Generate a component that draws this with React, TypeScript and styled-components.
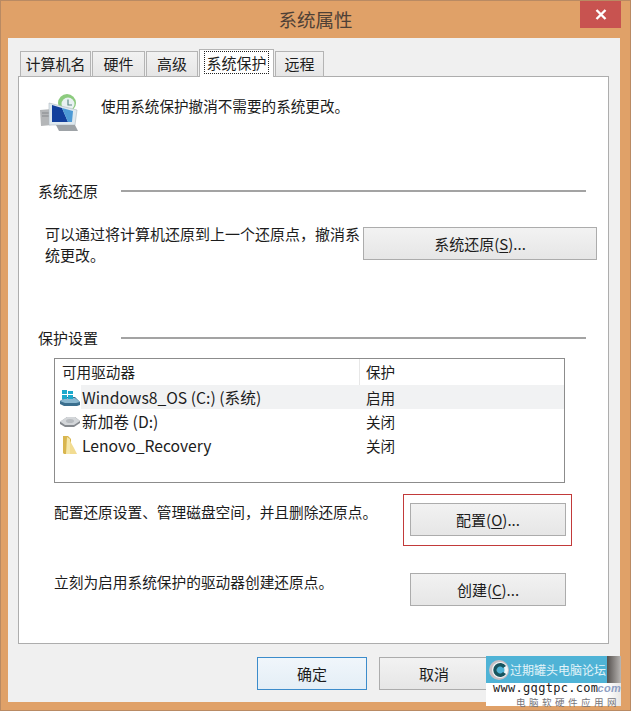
import React from 'react';
import styled, { createGlobalStyle } from 'styled-components';

const GlobalStyle = createGlobalStyle`
	html, body {
		margin: 0;
		padding: 0;
		background: #ffffff;
	}
	body {
		font-family: 'Noto Sans CJK SC', 'Open Sans', sans-serif;
		color: #1c1c1c;
	}
`;

const Window = styled.div`
	position: relative;
	width: 631px;
	height: 711px;
	box-sizing: border-box;
	background: #e0a168;
	border: 1px solid #b98a63;
	display: flex;
	flex-direction: column;
	overflow: hidden;
`;

const TitleBar = styled.div`
	height: 37px;
	box-sizing: border-box;
	padding-bottom: 2px;
	flex: none;
	display: flex;
	justify-content: center;
	align-items: center;
	position: relative;
	font-size: 18.5px;
	color: #4e4036;
`;

const CloseButton = styled.div`
	position: absolute;
	right: 9px;
	top: 0;
	width: 41px;
	height: 27px;
	background: #c85350;
	display: flex;
	align-items: center;
	justify-content: center;
`;

const Client = styled.div`
	flex: 1;
	margin: 0 10px 8px 7px;
	background: #f0f0f0;
	padding: 10px 11px 0 10px;
	display: flex;
	flex-direction: column;
`;

const TabStrip = styled.div`
	display: flex;
	align-items: flex-end;
	gap: 1px;
	height: 29px;
	padding-left: 2px;
	flex: none;
	position: relative;
	z-index: 1;
	margin-bottom: -1px;
`;

const Tab = styled.div<{ $width: number; $active?: boolean }>`
	width: ${p => p.$width}px;
	height: ${p => (p.$active ? 28 : 26)}px;
	box-sizing: border-box;
	display: flex;
	align-items: center;
	justify-content: center;
	font-size: 15px;
	padding-bottom: 2px;
	border: 1px solid #b4b4b4;
	border-bottom: ${p => (p.$active ? 'none' : '1px solid #b4b4b4')};
	background: ${p => (p.$active ? '#ffffff' : 'linear-gradient(#f2f2f2, #e6e6e6)')};
`;

const FocusLabel = styled.span`
	outline: 1px dotted #222222;
	padding: 0 1px;
	line-height: 21px;
`;

const Panel = styled.div`
	width: 591px;
	height: 568px;
	box-sizing: border-box;
	background: #ffffff;
	border: 1px solid #adadad;
	padding: 10px 22px 0 19px;
	display: flex;
	flex-direction: column;
`;

const IntroRow = styled.div`
	display: flex;
	align-items: flex-start;
	gap: 19px;
	height: 94px;
	padding-left: 2px;
	box-sizing: border-box;
	font-size: 14.6px;
	line-height: 20px;
`;

const IntroIcon = styled.div`
	padding-top: 7px;
	height: 40px;
`;

const IntroText = styled.span`
	padding-top: 9px;
`;

const SectionHeading = styled.div`
	display: flex;
	align-items: center;
	gap: 23px;
	font-size: 15px;
	line-height: 20px;
	height: 20px;

	&::after {
		content: '';
		flex: 1;
		height: 2px;
		background: #a3a3a3;
	}
`;

const RestoreRow = styled.div`
	display: flex;
	justify-content: space-between;
	align-items: flex-start;
	margin: 26px -11px 0 7px;
	height: 101px;
`;

const RestoreText = styled.p`
	margin: 0;
	width: 318px;
	font-size: 15px;
	line-height: 21px;
	height: 33px;
	display: flex;
	align-items: center;
`;

const Button = styled.div<{ $width: number; $default?: boolean }>`
	width: ${p => p.$width}px;
	height: 33px;
	box-sizing: border-box;
	padding-bottom: 1px;
	flex: none;
	display: flex;
	align-items: center;
	justify-content: center;
	font-size: 15px;
	color: #1c1c1c;
	border: 1px solid ${p => (p.$default ? '#3c8ccb' : '#acacac')};
	background: ${p => (p.$default ? 'linear-gradient(#f0f6fb, #e4eef6)' : 'linear-gradient(#f2f2f2, #e6e6e6)')};
`;

const Shortcut = styled.span`
	text-decoration: underline;
	text-underline-offset: 2px;
`;

const DriveList = styled.div`
	margin: 10px 21px 0 16px;
	height: 125px;
	box-sizing: border-box;
	border: 1px solid #8c8c8c;
	background: #ffffff;
	font-size: 14.6px;
`;

const DriveHeader = styled.div`
	display: grid;
	grid-template-columns: 305px 1fr;
	height: 26px;
	align-items: center;
	line-height: 26px;
`;

const HeaderCell = styled.div`
	padding-left: 7px;
	border-right: 1px solid #e7e7e7;

	&:last-child {
		border-right: none;
		padding-left: 6px;
	}
`;

const DriveRow = styled.div<{ $selected?: boolean }>`
	display: grid;
	grid-template-columns: 305px 1fr;
	height: 24px;
	align-items: center;
	background: ${p => (p.$selected ? 'linear-gradient(90deg, #ffffff 0, #ffffff 26px, #f1f2f3 26px)' : 'transparent')};
`;

const DriveName = styled.div`
	display: flex;
	align-items: center;
	gap: 1px;
	padding-left: 4px;
	font-size: 15.7px;
	white-space: nowrap;
`;

const DriveState = styled.div`
	padding-left: 6px;
	font-size: 14.6px;
`;

const ActionRow = styled.div<{ $top: number }>`
	display: flex;
	align-items: flex-start;
	justify-content: space-between;
	margin: ${p => p.$top}px 20px 0 16px;
	font-size: 14.7px;
`;

const ActionText = styled.span`
	line-height: 20px;
	margin-top: -1px;
`;

const Highlight = styled.div`
	position: absolute;
	left: 402px;
	top: 493px;
	width: 169px;
	height: 52px;
	box-sizing: border-box;
	border: 1px solid #c23a3a;
`;

const Footer = styled.div`
	display: flex;
	gap: 12px;
	padding: 13px 0 0 239px;
`;

const Watermark = styled.div`
	position: absolute;
	left: 485px;
	top: 655px;
	width: 135px;
	height: 50px;
	background: linear-gradient(90deg, transparent 0, transparent 121px, #55504d 121px, #b9b6b3 135px);
`;

const WatermarkBand = styled.div`
	width: 121px;
	height: 27px;
	background: #4fb3d6;
	color: #e3f4f9;
	font-size: 12px;
	display: flex;
	align-items: center;
	padding-left: 2px;
	box-sizing: border-box;
	white-space: nowrap;

	svg {
		flex: none;
	}
`;

const WatermarkBody = styled.div`
	position: relative;
	height: 23px;
	background: linear-gradient(90deg, #ffffff 0, #ffffff 121px, #e8e6e4 135px);
`;

const WatermarkUrl = styled.div`
	font-family: 'DejaVu Sans Mono', monospace;
	font-size: 12px;
	letter-spacing: 0.3px;
	line-height: 11px;
	padding-left: 7px;
	color: #222222;
	white-space: nowrap;
	position: relative;
`;

const WatermarkMark = styled.span`
	position: absolute;
	right: 0;
	top: 0;
	font-family: 'Liberation Sans', sans-serif;
	font-style: italic;
	font-weight: bold;
	font-size: 11px;
	line-height: 11px;
	color: #8f9fc4;
`;

const WatermarkSite = styled.div`
	position: absolute;
	right: 1px;
	bottom: -1px;
	font-size: 9.5px;
	line-height: 10px;
	letter-spacing: 3.5px;
	color: #77757a;
	white-space: nowrap;
`;

const SystemIcon = () => (
	<svg width="42" height="40" viewBox="0 0 42 40">
		<path d="M0 16l12-1v16l-11 1z" fill="#b4b6b8" />
		<path d="M2 19h8M2 22h8" stroke="#85888c" />
		<circle cx="27" cy="9" r="9" fill="#8ccb7e" />
		<circle cx="28" cy="10" r="6.5" fill="#e9f1f2" />
		<path d="M28 5.5V11h4" fill="none" stroke="#5f8a86" strokeWidth="1.2" />
		<path d="M9 9l28 7-2 15H9z" fill="#dfe9ef" stroke="#aeb9c0" strokeWidth="0.6" />
		<path d="M12 11l10 3 6 14H12z" fill="#123f9c" />
		<path d="M22 14l11 3-1 11h-4z" fill="#4d9ad6" />
		<path d="M16 31h19l3 6H19z" fill="#9ea3a7" />
	</svg>
);

const WindowsDriveIcon = () => (
	<svg width="22" height="20" viewBox="0 0 22 20">
		<path d="M1 14l6-4h9l5 5v3l-3 1H5l-4-2z" fill="#3b6f8e" />
		<path d="M1 14l6-3h9l5 4-4 1H6z" fill="#8bb8d0" />
		<rect x="3" y="3" width="5" height="4" fill="#1da9cc" />
		<rect x="9" y="4" width="5" height="3" fill="#1da9cc" />
		<rect x="3" y="8" width="5" height="4" fill="#1da9cc" />
		<rect x="9" y="8" width="5" height="4" fill="#1da9cc" />
	</svg>
);

const PlainDriveIcon = () => (
	<svg width="22" height="20" viewBox="0 0 22 20">
		<path d="M1 11l7-5h8l5 4v2l-6 4H6l-5-3z" fill="#85898e" />
		<path d="M1 10.5L8 6h8l5 4-6 4H6z" fill="#d3d6d9" />
		<ellipse cx="11" cy="10" rx="4" ry="2" fill="#b7bbbf" />
	</svg>
);

const FolderIcon = () => (
	<svg width="22" height="20" viewBox="0 0 22 20">
		<path d="M4 1h5l3 3v15H5l-1-1z" fill="#d9b64f" />
		<path d="M10 4l5 9 3 6h-8z" fill="#f2dc92" />
		<path d="M8 2l3 2v15H7z" fill="#f6e8ab" />
	</svg>
);

const CloseIcon = () => (
	<svg width="12" height="11" viewBox="0 0 12 11">
		<path d="M1.5 1l9 9M10.5 1l-9 9" stroke="#ffffff" strokeWidth="2.4" />
	</svg>
);

const RingLogo = () => (
	<svg width="22" height="24" viewBox="0 0 22 24">
		<circle cx="11" cy="12" r="10" fill="#c9bfc4" />
		<circle cx="12" cy="12" r="8" fill="#f2f6f7" />
		<circle cx="12.5" cy="12" r="4" fill="#4fb3d6" />
		<path d="M18 8a7 7 0 1 0 0 8l-3-2a3.5 3.5 0 1 1 0-4z" fill="#17545f" />
	</svg>
);

const drives = [
	{ name: 'Windows8_OS (C:) (系统)', state: '启用', icon: <WindowsDriveIcon />, selected: true },
	{ name: '新加卷 (D:)', state: '关闭', icon: <PlainDriveIcon /> },
	{ name: 'Lenovo_Recovery', state: '关闭', icon: <FolderIcon /> },
];

export default function App() {
	return (
		<>
			<GlobalStyle />
			<Window>
				<TitleBar>
					系统属性
					<CloseButton>
						<CloseIcon />
					</CloseButton>
				</TitleBar>
				<Client>
					<TabStrip>
						<Tab $width={71}>计算机名</Tab>
						<Tab $width={53}>硬件</Tab>
						<Tab $width={52}>高级</Tab>
						<Tab $width={75} $active>
							<FocusLabel>系统保护</FocusLabel>
						</Tab>
						<Tab $width={49}>远程</Tab>
					</TabStrip>
					<Panel>
						<IntroRow>
							<IntroIcon>
								<SystemIcon />
							</IntroIcon>
							<IntroText>使用系统保护撤消不需要的系统更改。</IntroText>
						</IntroRow>
						<SectionHeading>系统还原</SectionHeading>
						<RestoreRow>
							<RestoreText>可以通过将计算机还原到上一个还原点，撤消系统更改。</RestoreText>
							<Button $width={234}>
								系统还原(<Shortcut>S</Shortcut>)...
							</Button>
						</RestoreRow>
						<SectionHeading>保护设置</SectionHeading>
						<DriveList>
							<DriveHeader>
								<HeaderCell>可用驱动器</HeaderCell>
								<HeaderCell>保护</HeaderCell>
							</DriveHeader>
							{drives.map(drive => (
								<DriveRow key={drive.name} $selected={drive.selected}>
									<DriveName>
										{drive.icon}
										{drive.name}
									</DriveName>
									<DriveState>{drive.state}</DriveState>
								</DriveRow>
							))}
						</DriveList>
						<ActionRow $top={20}>
							<ActionText>配置还原设置、管理磁盘空间，并且删除还原点。</ActionText>
							<Button $width={156}>
								配置(<Shortcut>O</Shortcut>)...
							</Button>
						</ActionRow>
						<ActionRow $top={37}>
							<ActionText>立刻为启用系统保护的驱动器创建还原点。</ActionText>
							<Button $width={156}>
								创建(<Shortcut>C</Shortcut>)...
							</Button>
						</ActionRow>
					</Panel>
					<Footer>
						<Button $width={110} $default>确定</Button>
						<Button $width={110}>取消</Button>
					</Footer>
				</Client>
				<Highlight />
				<Watermark>
					<WatermarkBand>
						<RingLogo />
						过期罐头电脑论坛
					</WatermarkBand>
					<WatermarkBody>
						<WatermarkUrl>
							www.gqgtpc.com
							<WatermarkMark>com</WatermarkMark>
						</WatermarkUrl>
						<WatermarkSite>电脑软硬件应用网</WatermarkSite>
					</WatermarkBody>
				</Watermark>
			</Window>
		</>
	);
}
